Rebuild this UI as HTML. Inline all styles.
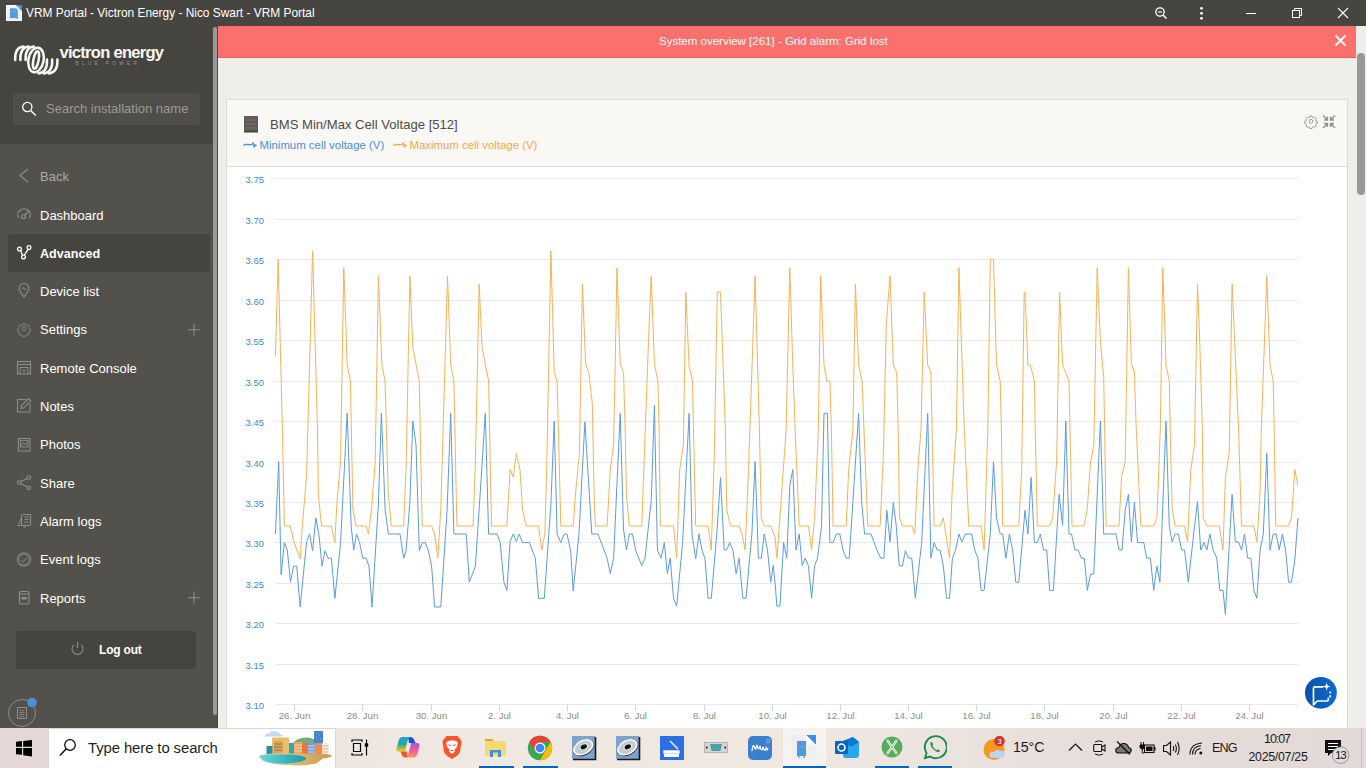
<!DOCTYPE html>
<html><head><meta charset="utf-8">
<style>
*{margin:0;padding:0;box-sizing:border-box}
html,body{width:1366px;height:768px;overflow:hidden;background:#efeeea;font-family:"Liberation Sans",sans-serif}
.abs{position:absolute}
#titlebar{left:0;top:0;width:1366px;height:26px;background:#474540;color:#fff;font-size:13px}
#sidebar{left:0;top:26px;width:218px;height:702px;background:#53514c}
#sbtop{left:0;top:0;width:212px;height:118px;background:#46443f}
.mi{position:absolute;left:40px;font-size:13.5px;color:#fff;line-height:16px}
.ic{position:absolute;left:16px}
#banner{left:218px;top:26px;width:1138px;height:32px;background:#fb706c;border-bottom:1px solid #f25a56;color:#fff;font-size:11.5px}
#card{left:226px;top:99px;width:1122px;height:640px;background:#fff;border:1px solid #dcdad6}
#cardhead{left:0;top:0;width:1120px;height:67px;background:#f9f8f5;border-bottom:1px solid #dcdad6}
#taskbar{left:0;top:728px;width:1366px;height:40px;background:linear-gradient(90deg,#e9e0dc 0%,#f0e9e1 35%,#efe7e0 60%,#e7dedb 80%,#e2d9d8 100%)}
</style></head><body>
<div id="titlebar" class="abs">
  <svg class="abs" style="left:6px;top:5px" width="16" height="16" viewBox="0 0 16 16"><rect width="16" height="16" fill="#fcfcfc"/><rect x="1" y="1" width="14" height="14" fill="#f1f0ef"/><path d="M9.8 0H16V6.2Z" fill="#3e8fdc"/><path d="M12.5 1.8L14 3" stroke="#bcd8f3" stroke-width="0.7"/><path d="M4 3.2H10L11.8 5V13.8H10.5L10 13H5.5L4 13.8Z" fill="#4a9de6"/><path d="M4 6.5H11.5" stroke="#c4a060" stroke-width="0.6"/></svg>
  <div class="abs" style="left:26px;top:5px;line-height:16px;font-size:11.9px">VRM Portal - Victron Energy - Nico Swart - VRM Portal</div>
<svg class="abs" style="left:1150px;top:0" width="216" height="26" viewBox="1150 0 216 26">
  <circle cx="1160" cy="12" r="4.2" stroke="#fff" stroke-width="1.3" fill="none"/><path d="M1158 12H1162" stroke="#fff" stroke-width="1.2"/><path d="M1163 15L1166.5 18.5" stroke="#fff" stroke-width="1.5"/>
  <circle cx="1201.5" cy="8.3" r="1.4" fill="#fff"/><circle cx="1201.5" cy="13.3" r="1.4" fill="#fff"/><circle cx="1201.5" cy="18.3" r="1.4" fill="#fff"/>
  <path d="M1246 13.5H1256" stroke="#fff" stroke-width="1"/>
  <rect x="1292.5" y="10.5" width="7" height="7" stroke="#fff" stroke-width="1" fill="none"/><path d="M1294.5 10.5V8.5H1301.5V15.5H1299.5" stroke="#fff" stroke-width="1" fill="none"/>
  <path d="M1338 8L1348 18M1348 8L1338 18" stroke="#fff" stroke-width="1.1"/>
</svg>
</div>
<div id="sidebar" class="abs">
  <div id="sbtop" class="abs"></div>
  <svg class="abs" style="left:12px;top:18px" width="52" height="32" viewBox="0 0 52 32">
  <g stroke="#f8f7f2" stroke-width="2.5" fill="none" stroke-linecap="round">
   <path d="M3.2 16Q2.6 3.5 11.5 2.6"/><path d="M8.4 16Q7.8 3.5 16.7 2.6"/><path d="M13.6 16Q13 3.5 21.9 2.6"/>
   <ellipse cx="24" cy="16" rx="7.6" ry="12.4" transform="rotate(11 24 16)"/>
   <ellipse cx="24" cy="16" rx="2.6" ry="9" transform="rotate(11 24 16)"/>
   <path d="M35 15.5Q35.6 28.5 26.5 29.4"/><path d="M40.2 15.5Q40.8 28.5 31.7 29.4"/><path d="M45.4 15.5Q46 28.5 36.9 29.4"/>
  </g></svg>
  <div class="abs" style="left:59.5px;top:16.8px;font-size:16.6px;font-weight:700;color:#f8f7f2;line-height:20px;letter-spacing:-0.75px">victron energy</div>
  <div class="abs" style="left:75.5px;top:34.5px;font-size:4.6px;color:#9a9893;line-height:6px;letter-spacing:3.4px;font-weight:400">BLUE POWER</div>
  <div class="abs" style="left:212px;top:0;width:6px;height:118px;background:#4a4843"></div><div class="abs" style="left:217px;top:118px;width:1px;height:584px;background:#47453f"></div>
  <div class="abs" style="left:213px;top:1px;width:4px;height:688px;background:#9c9b97;border-radius:2px"></div>
  <div class="abs" style="left:8px;top:208px;width:202px;height:38px;background:#46443f;border-radius:3px"></div>
  <div class="abs" style="left:13px;top:67px;width:187px;height:32px;background:#504e49;border-radius:3px"></div>
  <div class="abs" style="left:46px;top:74.5px;font-size:13px;color:#9d9b96;line-height:16px">Search installation name</div>
  <svg class="abs" style="left:21px;top:74px" width="17" height="17"><circle cx="6.3" cy="7" r="4.6" stroke="#fff" stroke-width="1.3" fill="none"/><path d="M9.6 10.4L14.8 15.4" stroke="#fff" stroke-width="1.4"/></svg>
  <div class="mi" style="top:143.2px;color:#a9a7a2;font-weight:400;font-size:13px">Back</div><div class="mi" style="top:181.5px;color:#fff;font-weight:400;font-size:13px">Dashboard</div><div class="mi" style="top:219.8px;color:#fff;font-weight:700;font-size:12.6px">Advanced</div><div class="mi" style="top:258.1px;color:#fff;font-weight:400;font-size:13px">Device list</div><div class="mi" style="top:296.4px;color:#fff;font-weight:400;font-size:13px">Settings</div><div class="mi" style="top:334.7px;color:#fff;font-weight:400;font-size:13px">Remote Console</div><div class="mi" style="top:373.0px;color:#fff;font-weight:400;font-size:13px">Notes</div><div class="mi" style="top:411.3px;color:#fff;font-weight:400;font-size:13px">Photos</div><div class="mi" style="top:449.6px;color:#fff;font-weight:400;font-size:13px">Share</div><div class="mi" style="top:487.9px;color:#fff;font-weight:400;font-size:13px">Alarm logs</div><div class="mi" style="top:526.2px;color:#fff;font-weight:400;font-size:13px">Event logs</div><div class="mi" style="top:564.5px;color:#fff;font-weight:400;font-size:13px">Reports</div><svg class="abs" style="left:0;top:-26px" width="212" height="728"><path d="M28 169L20 175.5L28 182" stroke="#8f8d88" stroke-width="1.2" fill="none"/><path d="M18.6 218.3A6.3 6.3 0 1 1 29.4 218.3" stroke="#8f8d88" stroke-width="1.2" fill="none"/><circle cx="23.5" cy="216.5" r="2" stroke="#8f8d88" stroke-width="1.2" fill="none"/><path d="M25 215L28.5 211.5" stroke="#8f8d88" stroke-width="1.2"/><circle cx="19.5" cy="249" r="1.9" stroke="#fff" stroke-width="1.3" fill="none"/><circle cx="29" cy="247.5" r="1.9" stroke="#fff" stroke-width="1.3" fill="none"/><circle cx="23.5" cy="257" r="1.9" stroke="#fff" stroke-width="1.3" fill="none"/><path d="M20.8 250.6L22.4 255.2M24.3 255.2L28.2 249.4" stroke="#fff" stroke-width="1.3"/><path d="M24 297C21 293 19 290.5 19 288.5A5 5 0 0 1 29 288.5C29 290.5 27 293 24 297Z" stroke="#8f8d88" stroke-width="1.1" fill="none"/><path d="M21.5 289L23 287.5L25 290L26.5 288.5" stroke="#8f8d88" stroke-width="1" fill="none"/><g transform="translate(24 328.7) scale(0.84) translate(-24 -328.7)"><circle cx="24" cy="328.7" r="2.3" stroke="#8f8d88" stroke-width="1.1" fill="none"/><path d="M22.7 322.6h2.6l.4 1.6 1.3.6 1.5-.8 1.8 1.8-.8 1.5.6 1.3 1.6.4v2.6l-1.6.4-.6 1.3.8 1.5-1.8 1.8-1.5-.8-1.3.6-.4 1.6h-2.6l-.4-1.6-1.3-.6-1.5.8-1.8-1.8.8-1.5-.6-1.3-1.6-.4v-2.6l1.6-.4.6-1.3-.8-1.5 1.8-1.8 1.5.8 1.3-.6z" stroke="#8f8d88" stroke-width="1.1" fill="none"/></g><rect x="17.5" y="361.5" width="13" height="12.5" stroke="#8f8d88" stroke-width="1.1" fill="none"/><path d="M17.5 364.5h13M20 367.5h8v6.5M20 367.5v6.5" stroke="#8f8d88" stroke-width="1.1" fill="none"/><circle cx="24" cy="371" r="1" stroke="#8f8d88" stroke-width="0.9" fill="none"/><path d="M26 399.5H17.5V412H30V404" stroke="#8f8d88" stroke-width="1.1" fill="none"/><path d="M21 408.5L21.5 405.5L28.5 398.5L30.8 400.8L23.8 407.8Z" stroke="#8f8d88" stroke-width="1.1" fill="none"/><rect x="18.5" y="438.5" width="11.5" height="12.5" stroke="#8f8d88" stroke-width="1.1" fill="none"/><rect x="20.5" y="440.5" width="7.5" height="6.5" stroke="#8f8d88" stroke-width="0.9" fill="none"/><path d="M21 446L23.5 442.5L25.5 445L28 441.5" stroke="#8f8d88" stroke-width="0.9" fill="none"/><circle cx="19.2" cy="482.5" r="1.8" stroke="#8f8d88" stroke-width="1.1" fill="none"/><circle cx="28.8" cy="477.5" r="1.8" stroke="#8f8d88" stroke-width="1.1" fill="none"/><circle cx="28.8" cy="487.8" r="1.8" stroke="#8f8d88" stroke-width="1.1" fill="none"/><path d="M20.8 481.6L27.2 478.4M20.8 483.4L27.2 486.9" stroke="#8f8d88" stroke-width="1.1"/><path d="M21.5 525V516.5A2 2 0 0 1 23.5 514.5H30.5V525" stroke="#8f8d88" stroke-width="1.1" fill="none"/><path d="M17.5 525.5H30.5M23.5 527H26M24.5 517h4M24.5 519.5h4M24.5 522h4" stroke="#8f8d88" stroke-width="1.1" fill="none"/><path d="M21.5 518L18.5 524.5" stroke="#8f8d88" stroke-width="1" fill="none"/><circle cx="24" cy="559.5" r="6.5" stroke="#8f8d88" stroke-width="1.1" fill="none"/><circle cx="24" cy="559.5" r="5" stroke="#8f8d88" stroke-width="0.6" fill="none"/><path d="M21.5 560L23.2 561.8L27 557.5" stroke="#8f8d88" stroke-width="1" fill="none"/><rect x="19.5" y="591.5" width="9.5" height="12.5" rx="1.5" stroke="#8f8d88" stroke-width="1.1" fill="none"/><path d="M19.5 594h9.5" stroke="#8f8d88" stroke-width="1" /><rect x="21.5" y="597" width="5.5" height="2.5" fill="#8f8d88"/><path d="M188 329.7H200M194 323.7V335.7" stroke="#8f8d88" stroke-width="1.1"/><path d="M188 597.8H200M194 591.8V603.8" stroke="#8f8d88" stroke-width="1.1"/></svg>
  <div class="abs" style="left:16px;top:605px;width:180px;height:38px;background:#46443f;border-radius:3px"></div>
  <svg class="abs" style="left:70px;top:615px" width="15" height="15"><path d="M3.8 3.8A5.5 5.5 0 1 0 11.2 3.8" stroke="#8f8d88" stroke-width="1.1" fill="none"/><path d="M7.5 1V7" stroke="#8f8d88" stroke-width="1.1"/></svg>
  <div class="abs" style="left:99px;top:616px;font-size:12px;font-weight:700;color:#fff;line-height:16px;letter-spacing:-0.2px">Log out</div>
  <svg class="abs" style="left:6px;top:670px" width="34" height="34"><circle cx="16" cy="17" r="13.5" stroke="#8f8d88" stroke-width="1" fill="none"/><rect x="11.5" y="11.5" width="9" height="11" stroke="#8f8d88" stroke-width="1" fill="none"/><path d="M13.5 14.5h5M13.5 16.5h5M13.5 18.5h5M13.5 20.5h5" stroke="#8f8d88" stroke-width="0.8"/><circle cx="26" cy="6.5" r="4.8" fill="#4a90d9"/></svg>
</div>
<div id="banner" class="abs"><div class="abs" style="left:441px;top:8px;line-height:14px">System overview [261] - Grid alarm: Grid lost</div><svg class="abs" style="left:1116px;top:8px" width="13" height="13"><path d="M1.5 1.5L11.5 11.5M11.5 1.5L1.5 11.5" stroke="#fff" stroke-width="1.8"/></svg></div>
<div class="abs" style="left:1357px;top:53px;width:8px;height:142px;background:#9a9995;border-radius:4px"></div>
<div id="card" class="abs">
  <div id="cardhead" class="abs"></div>
</div>
<svg class="abs" style="left:0;top:0" width="1366" height="728" viewBox="0 0 1366 728"><path d="M275 178.5H1298" stroke="#e9e9e9" stroke-width="1"/><path d="M275 219.5H1298" stroke="#e9e9e9" stroke-width="1"/><path d="M275 259.5H1298" stroke="#e9e9e9" stroke-width="1"/><path d="M275 300.5H1298" stroke="#e9e9e9" stroke-width="1"/><path d="M275 340.5H1298" stroke="#e9e9e9" stroke-width="1"/><path d="M275 381.5H1298" stroke="#e9e9e9" stroke-width="1"/><path d="M275 421.5H1298" stroke="#e9e9e9" stroke-width="1"/><path d="M275 462.5H1298" stroke="#e9e9e9" stroke-width="1"/><path d="M275 502.5H1298" stroke="#e9e9e9" stroke-width="1"/><path d="M275 542.5H1298" stroke="#e9e9e9" stroke-width="1"/><path d="M275 583.5H1298" stroke="#e9e9e9" stroke-width="1"/><path d="M275 623.5H1298" stroke="#e9e9e9" stroke-width="1"/><path d="M275 664.5H1298" stroke="#e9e9e9" stroke-width="1"/><path d="M275 704.5H1298" stroke="#e9e9e9" stroke-width="1"/><path d="M294.5 704V711" stroke="#ccd6eb" stroke-width="1"/><text x="294.5" y="719.3" text-anchor="middle" font-size="9.6" fill="#8c8c8c" font-family="Liberation Sans">26. Jun</text><path d="M362.5 704V711" stroke="#ccd6eb" stroke-width="1"/><text x="362.5" y="719.3" text-anchor="middle" font-size="9.6" fill="#8c8c8c" font-family="Liberation Sans">28. Jun</text><path d="M431.5 704V711" stroke="#ccd6eb" stroke-width="1"/><text x="431.5" y="719.3" text-anchor="middle" font-size="9.6" fill="#8c8c8c" font-family="Liberation Sans">30. Jun</text><path d="M499.5 704V711" stroke="#ccd6eb" stroke-width="1"/><text x="499.5" y="719.3" text-anchor="middle" font-size="9.6" fill="#8c8c8c" font-family="Liberation Sans">2. Jul</text><path d="M567.5 704V711" stroke="#ccd6eb" stroke-width="1"/><text x="567.5" y="719.3" text-anchor="middle" font-size="9.6" fill="#8c8c8c" font-family="Liberation Sans">4. Jul</text><path d="M635.5 704V711" stroke="#ccd6eb" stroke-width="1"/><text x="635.5" y="719.3" text-anchor="middle" font-size="9.6" fill="#8c8c8c" font-family="Liberation Sans">6. Jul</text><path d="M704.5 704V711" stroke="#ccd6eb" stroke-width="1"/><text x="704.5" y="719.3" text-anchor="middle" font-size="9.6" fill="#8c8c8c" font-family="Liberation Sans">8. Jul</text><path d="M772.5 704V711" stroke="#ccd6eb" stroke-width="1"/><text x="772.5" y="719.3" text-anchor="middle" font-size="9.6" fill="#8c8c8c" font-family="Liberation Sans">10. Jul</text><path d="M840.5 704V711" stroke="#ccd6eb" stroke-width="1"/><text x="840.5" y="719.3" text-anchor="middle" font-size="9.6" fill="#8c8c8c" font-family="Liberation Sans">12. Jul</text><path d="M908.5 704V711" stroke="#ccd6eb" stroke-width="1"/><text x="908.5" y="719.3" text-anchor="middle" font-size="9.6" fill="#8c8c8c" font-family="Liberation Sans">14. Jul</text><path d="M976.5 704V711" stroke="#ccd6eb" stroke-width="1"/><text x="976.5" y="719.3" text-anchor="middle" font-size="9.6" fill="#8c8c8c" font-family="Liberation Sans">16. Jul</text><path d="M1044.5 704V711" stroke="#ccd6eb" stroke-width="1"/><text x="1044.5" y="719.3" text-anchor="middle" font-size="9.6" fill="#8c8c8c" font-family="Liberation Sans">18. Jul</text><path d="M1113.5 704V711" stroke="#ccd6eb" stroke-width="1"/><text x="1113.5" y="719.3" text-anchor="middle" font-size="9.6" fill="#8c8c8c" font-family="Liberation Sans">20. Jul</text><path d="M1181.5 704V711" stroke="#ccd6eb" stroke-width="1"/><text x="1181.5" y="719.3" text-anchor="middle" font-size="9.6" fill="#8c8c8c" font-family="Liberation Sans">22. Jul</text><path d="M1249.5 704V711" stroke="#ccd6eb" stroke-width="1"/><text x="1249.5" y="719.3" text-anchor="middle" font-size="9.6" fill="#8c8c8c" font-family="Liberation Sans">24. Jul</text><text x="245.5" y="182.6" font-size="9.5" fill="#3f86d6" font-family="Liberation Sans">3.75</text><text x="245.5" y="223.6" font-size="9.5" fill="#3f86d6" font-family="Liberation Sans">3.70</text><text x="245.5" y="263.6" font-size="9.5" fill="#3f86d6" font-family="Liberation Sans">3.65</text><text x="245.5" y="304.6" font-size="9.5" fill="#3f86d6" font-family="Liberation Sans">3.60</text><text x="245.5" y="344.6" font-size="9.5" fill="#3f86d6" font-family="Liberation Sans">3.55</text><text x="245.5" y="385.6" font-size="9.5" fill="#3f86d6" font-family="Liberation Sans">3.50</text><text x="245.5" y="425.6" font-size="9.5" fill="#3f86d6" font-family="Liberation Sans">3.45</text><text x="245.5" y="466.6" font-size="9.5" fill="#3f86d6" font-family="Liberation Sans">3.40</text><text x="245.5" y="506.6" font-size="9.5" fill="#3f86d6" font-family="Liberation Sans">3.35</text><text x="245.5" y="546.6" font-size="9.5" fill="#3f86d6" font-family="Liberation Sans">3.30</text><text x="245.5" y="587.6" font-size="9.5" fill="#3f86d6" font-family="Liberation Sans">3.25</text><text x="245.5" y="627.6" font-size="9.5" fill="#3f86d6" font-family="Liberation Sans">3.20</text><text x="245.5" y="668.6" font-size="9.5" fill="#3f86d6" font-family="Liberation Sans">3.15</text><text x="245.5" y="708.6" font-size="9.5" fill="#3f86d6" font-family="Liberation Sans">3.10</text><path d="M275.4 356.3 L278.2 259.3 L282.4 430.0 L284.4 526.0 L290.3 526.0 L294.0 542.6 L300.2 558.7 L301.7 534.0 L306.6 474.6 L312.6 251.0 L317.5 430.0 L318.3 494.0 L321.5 526.0 L331.4 526.0 L334.9 542.6 L336.8 504.0 L340.5 462.0 L343.8 267.7 L347.2 365.0 L350.4 381.0 L352.9 509.0 L356.1 526.0 L366.0 526.0 L368.5 534.0 L371.5 509.0 L375.2 462.0 L378.4 275.9 L381.9 365.0 L385.0 381.0 L388.3 494.0 L391.3 526.0 L400.0 526.0 L403.7 526.0 L406.1 467.0 L409.9 275.9 L412.8 347.7 L419.3 381.0 L420.2 430.0 L422.2 526.0 L431.6 526.0 L434.6 534.0 L437.8 558.2 L440.8 509.2 L447.5 275.9 L450.7 363.8 L453.9 381.0 L456.9 526.0 L473.0 526.0 L475.4 462.0 L479.2 284.0 L482.1 347.7 L488.6 381.0 L491.5 526.0 L506.9 526.0 L510.1 469.6 L513.3 477.0 L516.3 453.5 L520.0 469.6 L522.5 509.2 L525.0 521.6 L526.2 526.0 L538.6 526.0 L541.8 550.0 L544.8 534.0 L546.7 469.6 L550.9 251.1 L554.2 372.4 L557.1 381.0 L558.4 430.0 L560.8 526.0 L573.2 526.0 L575.7 491.9 L579.4 453.5 L582.4 284.0 L585.6 363.8 L588.8 372.4 L592.3 403.4 L594.3 504.0 L595.5 526.0 L607.1 526.0 L610.3 469.6 L613.6 444.9 L617.0 267.7 L620.2 363.8 L623.5 372.4 L625.2 430.0 L626.4 494.4 L629.4 526.0 L641.8 526.0 L643.8 469.6 L648.7 336.5 L651.2 275.9 L654.4 363.8 L657.9 381.0 L659.1 430.0 L660.3 526.0 L673.5 526.0 L676.7 558.2 L679.7 469.6 L683.4 444.9 L685.8 292.0 L689.1 366.2 L692.5 381.0 L693.5 430.0 L695.7 526.0 L708.1 526.0 L711.3 550.0 L714.3 454.8 L717.3 292.0 L720.5 292.0 L725.4 430.0 L726.7 509.2 L730.4 526.0 L739.1 526.0 L742.0 534.0 L745.2 550.0 L748.5 469.6 L755.1 275.9 L759.4 430.0 L761.3 517.9 L764.3 526.0 L770.7 526.0 L773.7 534.0 L775.0 536.4 L776.9 558.2 L779.9 517.9 L786.1 430.0 L789.8 267.7 L792.8 366.2 L795.2 430.0 L799.2 526.0 L808.4 526.0 L811.6 550.0 L814.6 517.9 L818.3 430.0 L820.7 275.9 L824.0 365.0 L826.9 381.0 L829.9 381.0 L831.4 430.0 L833.1 526.0 L846.2 526.0 L848.7 469.6 L852.9 430.0 L855.4 284.0 L858.6 365.0 L862.1 381.0 L864.0 430.0 L867.8 526.0 L880.1 526.0 L883.4 454.8 L886.3 324.2 L890.0 275.9 L893.3 365.0 L896.7 372.4 L898.2 430.0 L899.5 517.9 L900.0 519.0 L902.4 526.0 L911.8 526.0 L914.8 534.0 L917.8 469.6 L921.0 430.0 L924.2 292.0 L927.7 365.0 L930.9 372.4 L932.1 430.0 L934.1 526.0 L940.0 526.0 L943.3 517.9 L949.5 558.2 L952.4 485.7 L956.4 430.0 L958.9 267.7 L964.3 430.0 L968.8 526.0 L981.1 526.0 L984.1 550.0 L987.8 430.0 L990.3 259.3 L993.5 259.3 L996.5 365.0 L1000.2 381.0 L1001.4 430.0 L1002.7 526.0 L1018.8 526.0 L1021.7 469.6 L1024.2 292.0 L1025.0 292.0 L1027.9 365.0 L1030.4 365.0 L1034.4 381.0 L1035.3 430.0 L1037.3 526.0 L1049.7 526.0 L1052.7 517.9 L1056.6 462.0 L1059.6 292.0 L1062.6 365.0 L1069.0 381.0 L1070.0 430.0 L1072.0 526.0 L1083.9 526.0 L1087.3 509.2 L1090.5 462.0 L1093.8 444.9 L1097.2 267.7 L1100.4 341.5 L1103.7 377.4 L1104.7 430.0 L1106.1 526.0 L1119.0 526.0 L1121.5 477.0 L1125.2 462.0 L1128.4 267.7 L1131.4 363.8 L1134.4 372.4 L1136.3 430.0 L1140.8 526.0 L1150.0 526.0 L1153.7 526.0 L1156.9 517.9 L1160.3 430.0 L1162.8 267.7 L1166.0 365.0 L1169.3 381.0 L1170.2 430.0 L1172.2 509.2 L1175.2 526.0 L1184.6 526.0 L1187.6 541.9 L1190.8 469.6 L1194.5 444.9 L1197.5 284.0 L1199.5 334.0 L1202.4 430.0 L1203.2 517.9 L1206.9 526.0 L1219.3 526.0 L1223.0 550.0 L1225.4 477.0 L1229.2 453.5 L1232.1 284.0 L1238.6 430.0 L1241.5 526.0 L1253.9 526.0 L1256.9 541.9 L1260.1 491.9 L1261.3 430.0 L1266.8 275.9 L1270.0 365.0 L1273.2 381.0 L1274.2 430.0 L1275.7 526.0 L1288.6 526.0 L1291.5 517.9 L1294.8 469.6 L1298.0 485.7" stroke="#f7b257" stroke-width="1" fill="none" stroke-linejoin="round"/><path d="M275.4 534.0 L278.7 461.7 L281.1 574.8 L284.4 542.6 L287.3 550.0 L290.5 582.2 L293.5 566.1 L296.7 566.1 L300.2 607.0 L306.6 541.4 L309.6 534.0 L312.6 550.8 L315.8 517.9 L319.0 535.2 L322.0 566.1 L325.0 550.8 L328.2 558.2 L331.4 558.2 L334.9 598.3 L340.5 543.9 L347.2 413.0 L351.2 526.5 L353.7 550.0 L356.6 534.0 L359.6 542.6 L362.8 558.2 L366.0 558.2 L369.0 566.1 L372.0 607.0 L378.4 504.0 L381.4 413.0 L385.1 509.2 L388.3 534.0 L400.0 534.0 L403.7 558.2 L406.1 550.8 L409.9 501.8 L412.8 421.2 L416.0 444.9 L419.3 550.8 L422.2 542.6 L425.2 542.6 L428.4 550.8 L431.6 566.1 L434.6 607.0 L440.8 607.0 L447.0 511.7 L450.7 413.3 L453.9 534.0 L466.3 534.0 L469.3 582.2 L475.4 566.1 L481.1 479.5 L485.3 413.3 L488.6 534.0 L497.0 534.0 L500.2 542.6 L503.9 582.2 L506.9 590.4 L510.1 541.4 L513.3 534.0 L516.3 541.4 L519.3 534.0 L522.5 542.6 L523.0 542.6 L525.0 542.6 L529.4 542.6 L535.3 558.2 L538.6 598.3 L544.3 598.3 L550.9 504.3 L554.2 421.2 L557.1 534.0 L560.8 542.6 L564.1 534.0 L567.0 534.0 L570.7 550.8 L573.2 590.9 L578.9 535.2 L584.9 422.0 L591.8 534.0 L598.0 534.0 L607.1 558.2 L610.3 573.6 L613.6 558.2 L620.2 413.3 L623.5 529.0 L626.4 550.0 L629.4 534.0 L632.6 534.0 L635.8 550.8 L641.8 565.6 L645.0 558.2 L650.0 511.7 L651.2 501.8 L654.4 405.3 L657.4 550.0 L661.1 558.2 L664.3 542.6 L667.3 573.6 L670.2 558.2 L673.5 598.3 L676.7 606.2 L682.6 542.6 L689.1 413.3 L692.0 534.0 L695.7 558.7 L699.0 534.0 L701.9 550.0 L704.9 558.2 L708.1 598.3 L711.3 598.3 L716.8 534.0 L720.5 477.5 L724.2 550.0 L726.7 550.0 L729.7 542.6 L732.9 550.0 L736.1 573.6 L739.1 558.2 L742.8 598.3 L746.0 598.3 L751.9 534.0 L755.1 461.7 L758.4 558.2 L761.3 558.2 L764.3 534.0 L767.5 550.0 L770.7 582.2 L773.2 565.6 L775.0 582.0 L776.9 606.2 L779.9 606.2 L783.6 542.6 L786.8 558.2 L789.8 485.7 L792.8 469.6 L796.0 550.0 L799.2 534.0 L802.2 565.6 L805.1 558.2 L808.4 565.6 L811.6 598.3 L814.6 565.6 L817.5 558.2 L821.5 526.5 L824.0 413.3 L827.4 413.3 L829.9 542.6 L833.1 542.6 L836.3 534.0 L839.8 534.0 L843.0 550.0 L846.2 558.2 L849.2 558.2 L852.9 501.8 L858.6 413.3 L861.6 501.8 L864.6 534.0 L871.0 534.0 L876.9 550.0 L880.9 558.2 L883.9 558.2 L886.8 510.4 L890.0 541.9 L893.3 502.3 L896.2 525.3 L899.2 565.6 L902.4 566.1 L905.4 550.8 L908.6 558.2 L911.8 558.2 L915.3 598.3 L921.7 542.6 L927.7 413.3 L930.9 558.2 L934.1 542.6 L937.1 550.0 L940.0 550.0 L943.3 565.6 L946.5 598.3 L949.5 598.3 L952.4 558.2 L955.6 550.0 L958.9 534.0 L961.8 541.9 L965.5 534.0 L971.7 534.0 L974.7 550.0 L977.9 558.2 L981.1 590.4 L984.1 590.4 L990.3 534.0 L993.5 461.7 L996.5 517.9 L1000.2 534.0 L1002.7 534.0 L1005.9 558.2 L1009.4 534.0 L1012.6 550.0 L1015.8 582.2 L1018.8 582.2 L1025.0 510.4 L1027.9 534.0 L1031.1 477.5 L1034.4 542.6 L1037.3 542.6 L1040.3 534.0 L1043.5 550.0 L1046.7 550.0 L1049.7 590.4 L1053.4 590.4 L1059.1 494.4 L1062.6 525.3 L1065.8 421.0 L1069.0 534.0 L1071.5 534.0 L1075.0 550.0 L1078.2 550.0 L1081.4 558.2 L1084.4 558.2 L1087.3 590.4 L1090.5 574.1 L1093.8 574.1 L1100.4 421.0 L1103.7 534.0 L1116.0 534.0 L1119.0 550.0 L1122.0 550.0 L1125.2 510.4 L1128.4 494.4 L1131.4 541.9 L1134.4 502.3 L1137.6 542.6 L1143.8 542.6 L1146.7 558.2 L1147.5 558.2 L1150.0 558.2 L1150.4 558.2 L1153.7 590.4 L1156.9 566.1 L1159.9 582.2 L1166.0 421.0 L1169.3 526.5 L1172.2 541.9 L1175.2 534.0 L1178.4 534.0 L1181.6 550.0 L1184.6 550.0 L1188.3 582.2 L1194.5 526.5 L1197.5 501.8 L1200.7 550.0 L1203.9 542.6 L1206.9 550.0 L1209.9 534.0 L1213.1 550.0 L1216.8 558.2 L1219.8 590.4 L1223.0 590.4 L1225.4 614.4 L1232.1 494.4 L1235.3 541.9 L1238.6 541.9 L1241.5 550.0 L1244.5 534.0 L1247.7 558.2 L1250.9 558.2 L1253.9 590.4 L1256.9 598.3 L1260.1 550.0 L1263.3 534.0 L1266.8 453.5 L1270.0 550.0 L1273.2 534.0 L1276.2 534.0 L1279.2 550.0 L1282.4 534.0 L1285.6 550.0 L1288.6 582.2 L1291.5 582.2 L1294.8 560.0 L1298.0 517.9" stroke="#5b9bdf" stroke-width="1" fill="none" stroke-linejoin="round"/></svg>
<svg class="abs" style="left:243px;top:115px" width="16" height="18" viewBox="0 0 16 18"><rect x="1" y="1" width="14" height="16" rx="1" fill="#5e5c58"/><rect x="1" y="16" width="14" height="1.5" fill="#3f3e3b"/><path d="M3 5h10M3 9h10M3 13h10" stroke="#7a7874" stroke-width="0.8"/><path d="M11 4.5h1M11 8.5h1M11 12.5h1" stroke="#c0504d" stroke-width="1"/></svg>
<div class="abs" style="left:270px;top:117px;font-size:13.1px;color:#4d4b47;line-height:16px">BMS Min/Max Cell Voltage [512]</div>
<svg class="abs" style="left:243px;top:141px" width="16" height="8"><path d="M0.7 5Q1.6 3 2.8 3.5L8.7 3.7L10.2 1.8L11.2 6.2L12.2 3.8L13.6 4.8" stroke="#4a90d9" stroke-width="1.3" fill="none" stroke-linejoin="round"/></svg>
<div class="abs" style="left:259.5px;top:138px;font-size:11.4px;color:#4a90d9;line-height:14px">Minimum cell voltage (V)</div>
<svg class="abs" style="left:393px;top:141px" width="16" height="8"><path d="M0.7 5Q1.6 3 2.8 3.5L8.7 3.7L10.2 1.8L11.2 6.2L12.2 3.8L13.6 4.8" stroke="#f5a74a" stroke-width="1.3" fill="none" stroke-linejoin="round"/></svg>
<div class="abs" style="left:409.5px;top:138px;font-size:11.4px;color:#f5a74a;line-height:14px">Maximum cell voltage (V)</div>
<svg class="abs" style="left:1303px;top:114px" width="34" height="16" viewBox="0 0 34 16"><g transform="translate(8 7.3) scale(0.88) translate(-8 -7.5)"><circle cx="8" cy="7.5" r="2.2" stroke="#8f8d88" stroke-width="1" fill="none"/><path d="M6.8 1.5h2.4l.4 1.5 1.2.5 1.4-.8 1.7 1.7-.8 1.4.5 1.2 1.5.4v2.4l-1.5.4-.5 1.2.8 1.4-1.7 1.7-1.4-.8-1.2.5-.4 1.5h-2.4l-.4-1.5-1.2-.5-1.4.8-1.7-1.7.8-1.4-.5-1.2-1.5-.4v-2.4l1.5-.4.5-1.2-.8-1.4 1.7-1.7 1.4.8 1.2-.5z" stroke="#8f8d88" stroke-width="1" fill="none"/></g><path d="M20 1.5L24.5 6M24.5 2.5V6H21M32 1.5L27.5 6M27.5 2.5V6H31M20 14L24.5 9.5M24.5 13V9.5H21M32 14L27.5 9.5M27.5 13V9.5H31" stroke="#8f8d88" stroke-width="1.3" fill="none"/></svg>
<div id="taskbar" class="abs">
  <div class="abs" style="left:0;top:0;width:48px;height:40px;background:#e4d7d5"></div>
  <svg class="abs" style="left:16px;top:11.5px" width="17" height="17" viewBox="0 0 17 17"><path d="M0 1.8L6 1.1V6.8H0ZM7.2 1L16 0V6.8H7.2ZM0 8.1H6V14.8L0 14.2ZM7.2 8.1H16V16.4L7.2 15.3Z" fill="#000"/></svg>
  <div class="abs" style="left:48px;top:0;width:288px;height:40px;background:#fff;border:1px solid #d9d6d3;border-bottom:none"></div>
  <svg class="abs" style="left:59px;top:10px" width="18" height="19" viewBox="0 0 18 19"><circle cx="11" cy="7" r="5.3" stroke="#000" stroke-width="1.2" fill="none"/><path d="M7.2 10.8L1 17.5" stroke="#000" stroke-width="1.3"/></svg>
  <div class="abs" style="left:88px;top:11.5px;font-size:14.9px;color:#1f1f1f;line-height:17px;letter-spacing:-0.1px">Type here to search</div>
  <svg class="abs" style="left:258px;top:2px" width="76" height="37" viewBox="0 0 76 37">
    <defs><linearGradient id="wsand" x1="0" y1="0" x2="1" y2="0"><stop offset="0" stop-color="#f0d9a0"/><stop offset="1" stop-color="#c99a48"/></linearGradient><linearGradient id="wsea" x1="0" y1="0" x2="1" y2="0"><stop offset="0" stop-color="#5ed8e0"/><stop offset="1" stop-color="#1a9aa8"/></linearGradient></defs>
    <path d="M6.5 6.5Q7 3 11 3.5Q13 0 17.5 1.5Q21 1 22 4Q25 4.5 25.5 6.5Z" fill="#c2dcef"/>
    <path d="M34 13.5Q41 6.5 50 7.5Q58 9 63 13.5Z" fill="#72ad78"/>
    <rect x="56" y="1" width="9" height="13" fill="#4a7fd0"/><path d="M58 3h1M61 5h1M58 7h1M62 9h1M59 11h1" stroke="#9cc0f0" stroke-width="0.8"/>
    <rect x="14" y="7.5" width="17" height="17" fill="#e9bd6a"/><rect x="16" y="11" width="8" height="13" fill="#d8a858"/><path d="M16 14h9M16 17h9M16 20h9" stroke="#8a6a50" stroke-width="0.8"/>
    <rect x="8.5" y="16" width="6" height="8" fill="#2a8fa0"/>
    <rect x="31" y="13" width="5" height="11" fill="#2fa8b8"/><rect x="36" y="12" width="8" height="12" fill="#e8a860"/><path d="M36 15h8M36 18h8M36 21h8" stroke="#f6e0c0" stroke-width="0.8"/>
    <rect x="44" y="13" width="6" height="11" fill="#e07848"/><rect x="50" y="13" width="7" height="11" fill="#7a9ae0"/><path d="M50 16h7M50 19h7M50 22h7" stroke="#e8eefc" stroke-width="0.8"/>
    <rect x="57" y="13" width="7" height="11" fill="#e8904a"/><rect x="64" y="13" width="6.5" height="12" rx="1" fill="#f4f0ea"/><path d="M64 16h6.5M64 19h6.5M64 22h6.5" stroke="#e8a060" stroke-width="0.9"/>
    <path d="M1.3 25.5Q6 23.5 20 23.5H60Q70 23.5 74 25.5Q72 28 65 28.5L58 33.5Q45 36.5 32 35Q16 35.5 5 31Q1 28 1.3 25.5Z" fill="url(#wsand)"/>
    <path d="M1.5 25.5Q10 24 30 24.5Q46 25 48.5 28.5Q46 32 35 33Q18 34.5 8 31.5Q2 29 1.5 25.5Z" fill="url(#wsea)"/>
  </svg>
  <svg class="abs" style="left:351px;top:11px" width="18" height="17" viewBox="0 0 18 17"><path d="M1 3V1H11V3M1 14V16H11V14M2.5 4.5H9.5V12.5H2.5Z" stroke="#000" stroke-width="1.2" fill="none"/><path d="M15.5 0.5V16.5" stroke="#000" stroke-width="1.2"/><rect x="13.8" y="4.3" width="3.4" height="3.4" fill="#000"/></svg>
  <svg class="abs" style="left:396px;top:8px" width="24" height="23" viewBox="0 0 24 23">
    <defs><linearGradient id="cp1" x1="0" y1="0" x2="0" y2="1"><stop offset="0" stop-color="#13a0f2"/><stop offset="0.5" stop-color="#2fa890"/><stop offset="1" stop-color="#f8cc10"/></linearGradient><linearGradient id="cp2" x1="0" y1="0" x2="0" y2="1"><stop offset="0" stop-color="#a458e8"/><stop offset="0.5" stop-color="#f05a90"/><stop offset="1" stop-color="#f89a60"/></linearGradient></defs>
    <path d="M12 1H14.5Q17 1 18.5 4.5L19.5 7H13Z" fill="#1a4fd8"/>
    <path d="M6 1H14.5Q12.5 1.5 11.8 4L8.8 15.5H2Q0 15.5 0.4 13L2.8 4Q3.8 1 6 1Z" fill="url(#cp1)"/>
    <path d="M11.5 21.5H9Q6.8 21.5 5.5 18.2L4.6 15.5H11Z" fill="#f05a2a"/>
    <path d="M18 21.5H9.5Q11.5 21 12.2 18.5L15.2 7H22Q24 7 23.6 9.5L21.2 18.5Q20.2 21.5 18 21.5Z" fill="url(#cp2)"/>
  </svg>
  <svg class="abs" style="left:442px;top:7px" width="20" height="25" viewBox="0 0 20 25"><path d="M4.5 1H15.5L18.5 4.5L19.5 7L18 17Q17 19.5 14 21.5L10 24L6 21.5Q3 19.5 2 17L0.5 7L1.5 4.5Z" fill="#fb542b"/><path d="M5 6.5L8 5.5H12L15 6.5L15.8 8.5L14.5 12.5L12.5 14.5L13 16.5L10 19L7 16.5L7.5 14.5L5.5 12.5L4.2 8.5Z" fill="#fff"/><path d="M6.5 9.5L9 11M13.5 9.5L11 11M8.5 15.5H11.5" stroke="#fb542b" stroke-width="1"/></svg>
  <svg class="abs" style="left:484px;top:10px" width="23" height="19" viewBox="0 0 23 19"><path d="M1 3Q1 1 3 1H8L10 3H21Q22 3 22 5V17Q22 18 21 18H2Q1 18 1 17Z" fill="#f8d775"/><path d="M1 1H8L10 3H1Z" fill="#e2a827"/><path d="M6 19V12H17V19H14V14.5H9V19Z" fill="#3c8fe0"/></svg>
  <svg class="abs" style="left:527px;top:7px" width="26" height="26" viewBox="0 0 26 26"><circle cx="13" cy="13" r="12.2" fill="#34a853"/><path d="M13 0.8A12.2 12.2 0 0 1 23.6 7H13Z M2.4 7A12.2 12.2 0 0 1 13 0.8L13 7Z" fill="#ea4335"/><path d="M23.6 7A12.2 12.2 0 0 1 13 25.2L18.3 16Z" fill="#fbbc04"/><path d="M2.4 7H13L7.7 16Z" fill="#ea4335"/><circle cx="13" cy="13" r="5.5" fill="#fff"/><circle cx="13" cy="13" r="4.3" fill="#4285f4"/></svg>
  <svg class="abs" style="left:571px;top:7px" width="26" height="26" viewBox="0 0 26 26"><rect x="1" y="1" width="23" height="23" fill="#7ea2cf"/><path d="M2 24.5H24.5V2" stroke="#1a1a1a" stroke-width="1.6" fill="none"/><ellipse cx="12.5" cy="12.8" rx="11.3" ry="7.6" transform="rotate(-28 12.5 12.8)" fill="#2a2a2a"/><ellipse cx="12.3" cy="12.3" rx="11" ry="7.3" transform="rotate(-28 12.3 12.3)" fill="#fafafa"/><ellipse cx="12.3" cy="12.3" rx="9.2" ry="5.8" transform="rotate(-28 12.3 12.3)" fill="#c2ccd2"/><ellipse cx="12.8" cy="11.8" rx="4.3" ry="2.8" transform="rotate(-28 12.8 11.8)" fill="#fafafa"/><ellipse cx="12.8" cy="11.8" rx="3.4" ry="2.2" transform="rotate(-28 12.8 11.8)" fill="#111"/></svg>
  <svg class="abs" style="left:615px;top:7px" width="26" height="26" viewBox="0 0 26 26"><rect x="1" y="1" width="23" height="23" fill="#7ea2cf"/><path d="M2 24.5H24.5V2" stroke="#1a1a1a" stroke-width="1.6" fill="none"/><ellipse cx="12.5" cy="12.8" rx="11.3" ry="7.6" transform="rotate(-28 12.5 12.8)" fill="#2a2a2a"/><ellipse cx="12.3" cy="12.3" rx="11" ry="7.3" transform="rotate(-28 12.3 12.3)" fill="#fafafa"/><ellipse cx="12.3" cy="12.3" rx="9.2" ry="5.8" transform="rotate(-28 12.3 12.3)" fill="#c2ccd2"/><ellipse cx="12.8" cy="11.8" rx="4.3" ry="2.8" transform="rotate(-28 12.8 11.8)" fill="#fafafa"/><ellipse cx="12.8" cy="11.8" rx="3.4" ry="2.2" transform="rotate(-28 12.8 11.8)" fill="#111"/></svg>
  <svg class="abs" style="left:660px;top:8px" width="24" height="24" viewBox="0 0 24 24"><rect width="24" height="24" fill="#2b6fe6"/><path d="M10 5L18 13M4 15H19V17H4Z" stroke="#fff" stroke-width="1.4" fill="#fff"/><rect x="4" y="18" width="15" height="3" fill="#fff"/></svg>
  <svg class="abs" style="left:704px;top:14px" width="24" height="11" viewBox="0 0 24 11"><rect x="0.5" y="0.5" width="23" height="10" fill="#d5d5d5" stroke="#aaa" stroke-width="0.8"/><path d="M6 2H18L16.5 9H7.5Z" fill="#4aa3a8"/><circle cx="2.8" cy="5.5" r="1" fill="#222"/><circle cx="21.2" cy="5.5" r="1" fill="#222"/></svg>
  <svg class="abs" style="left:748px;top:8px" width="24" height="24" viewBox="0 0 24 24"><rect width="24" height="24" rx="5" fill="#3a7fd0"/><path d="M4 15Q5 7 6.5 11Q7.5 16 9 9Q10.5 16 12 10Q13.5 17 15 11Q16.5 17 18 12Q19 16 20 12" stroke="#fff" stroke-width="1.3" fill="none"/><circle cx="20" cy="5" r="1.8" stroke="#a8c8ee" stroke-width="0.7" fill="none"/></svg>
  <div class="abs" style="left:783px;top:0;width:43px;height:40px;background:#f6f2ef"></div>
  <svg class="abs" style="left:792px;top:7px" width="24" height="25" viewBox="0 0 24 25"><rect x="0" y="0" width="24" height="25" fill="#f0eeee"/><path d="M14 0H24V10Z" fill="#3f8fe0"/><path d="M14 0L24 10H14Z" fill="#fff"/><path d="M5 6H14V21H5Z" fill="#4a9ae6"/><path d="M5 12H14" stroke="#c8a060" stroke-width="0.8"/><path d="M7 21V23M12 21V23" stroke="#4a9ae6" stroke-width="1.2"/></svg>
  <svg class="abs" style="left:835px;top:8px" width="25" height="23" viewBox="0 0 25 23"><path d="M8 5L18 1L24 6V19Q24 22 21 22H10Q8 22 8 19Z" fill="#28a8ea"/><path d="M8 5L18 1L24 6L16 11Z" fill="#0f78d4"/><rect x="0" y="5" width="13" height="13" rx="1" fill="#0a64c2"/><circle cx="6.5" cy="11.5" r="3.5" stroke="#fff" stroke-width="1.6" fill="none"/></svg>
  <svg class="abs" style="left:881px;top:8px" width="22" height="22" viewBox="0 0 22 22"><circle cx="11" cy="11" r="10.5" fill="#58ab5e"/><path d="M6 4L16 18M16 4L6 18" stroke="#fff" stroke-width="2.2"/><path d="M6 4L16 18M16 4L6 18" stroke="#58ab5e" stroke-width="0.7"/></svg>
  <svg class="abs" style="left:922px;top:7px" width="25" height="25" viewBox="0 0 25 25"><path d="M3 23L4.5 18A11 11 0 1 1 8 21.5Z" stroke="#1c8a4e" stroke-width="1.9" fill="none"/><path d="M8.5 7.5Q8 9 9.5 12Q12 16 15.5 17Q17 17.5 18 16L16.5 14.5L14.5 15Q12 14 10.5 11L11 9L9.8 7Z" fill="#1c8a4e"/></svg>
  <div class="abs" style="left:479px;top:38px;width:35px;height:2px;background:#0067c0"></div>
  <div class="abs" style="left:523px;top:38px;width:35px;height:2px;background:#0067c0"></div>
  <div class="abs" style="left:783px;top:38px;width:43px;height:2px;background:#0067c0"></div>
  <div class="abs" style="left:875px;top:38px;width:34px;height:2px;background:#0067c0"></div>
  <div class="abs" style="left:918px;top:38px;width:34px;height:2px;background:#0067c0"></div>
  <svg class="abs" style="left:982px;top:7px" width="26" height="26" viewBox="0 0 26 26"><circle cx="12" cy="14.5" r="10.5" fill="#f39a1e"/><path d="M8 22Q6 16 12 17Q14 13 18 16Q23 15 23 19.5Q23 23 19 23H10Q8 23 8 22Z" fill="#bcd4f2"/><circle cx="17.5" cy="6" r="5.3" fill="#d13438"/><text x="17.5" y="8.8" font-size="7.5" fill="#fff" text-anchor="middle" font-family="Liberation Sans">3</text></svg>
  <div class="abs" style="left:1013px;top:11px;font-size:14.2px;color:#1a1a1a;line-height:16px;letter-spacing:-0.1px">15°C</div>
  <svg class="abs" style="left:1068px;top:15px" width="15" height="8" viewBox="0 0 15 8"><path d="M1 7.5L7.5 1L14 7.5" stroke="#111" stroke-width="1.2" fill="none"/></svg>
  <svg class="abs" style="left:1093px;top:12px" width="13" height="16" viewBox="0 0 13 16"><path d="M2 2Q6 -0.5 10 2M2 14Q6 16.5 10 14" stroke="#111" stroke-width="1" fill="none"/><rect x="0.7" y="4.5" width="8" height="7" rx="1" stroke="#111" stroke-width="1.1" fill="none"/><path d="M8.7 7L12 5V11L8.7 9" stroke="#111" stroke-width="1.1" fill="none"/></svg>
  <svg class="abs" style="left:1115px;top:13px" width="17" height="14" viewBox="0 0 17 14"><path d="M4 12Q0.5 12 0.8 9Q1 6.5 4 6.5Q5 2 9.5 2.5Q13 3 13.5 6.5Q16.5 7 16.2 9.5Q16 12 13 12Z" fill="#777" stroke="#111" stroke-width="1.1"/><path d="M2 0.5L15 13.5" stroke="#111" stroke-width="1.3"/></svg>
  <svg class="abs" style="left:1139px;top:14px" width="17" height="12" viewBox="0 0 17 12"><path d="M2 0V3M4.5 0V3M1 3H5.5V5Q5.5 7 3.3 7Q1 7 1 5Z" stroke="#111" stroke-width="1" fill="#111"/><path d="M3.2 7V11H5" stroke="#111" stroke-width="1" fill="none"/><rect x="5.5" y="3" width="9.5" height="7.5" stroke="#111" stroke-width="1.1" fill="none"/><rect x="7" y="4.5" width="6.5" height="4.5" fill="#111"/><rect x="15" y="5" width="1.5" height="3.5" fill="#111"/></svg>
  <svg class="abs" style="left:1163px;top:13px" width="17" height="15" viewBox="0 0 17 15"><path d="M0.6 4.5H3.5L7.5 1V14L3.5 10.5H0.6Z" stroke="#111" stroke-width="1.1" fill="none"/><path d="M10 5Q11.5 7.5 10 10M12.3 3.5Q14.5 7.5 12.3 11.5M14.5 1Q17.8 7.5 14.5 14" stroke="#111" stroke-width="1.1" fill="none"/></svg>
  <svg class="abs" style="left:1189px;top:14px" width="15" height="13" viewBox="0 0 15 13"><path d="M1 12.5Q1 2 13 1M3.5 12.5Q3.5 4.5 12 3.8M6 12.5Q6 7.5 11.5 6.5" stroke="#111" stroke-width="1.1" fill="none"/><circle cx="11.8" cy="11" r="1.5" fill="#111"/></svg>
  <div class="abs" style="left:1212px;top:13px;font-size:12.6px;color:#1a1a1a;line-height:14px;letter-spacing:-0.9px">ENG</div>
  <div class="abs" style="left:1264px;top:3.5px;font-size:12.4px;color:#1a1a1a;line-height:14px;letter-spacing:-1px">10:07</div>
  <div class="abs" style="left:1248.5px;top:21.5px;font-size:12.3px;color:#1a1a1a;line-height:14px;letter-spacing:-0.25px">2025/07/25</div>
  <svg class="abs" style="left:1324px;top:11px" width="30" height="25" viewBox="0 0 30 25"><path d="M1 1H17V14H7L4 17V14H1Z" fill="#111"/><path d="M4 4.5H14M4 7.5H14M4 10.5H12" stroke="#fff" stroke-width="1"/><circle cx="16.6" cy="16.2" r="8.3" fill="#dcdcdc" stroke="#8a8a8a" stroke-width="0.8"/><text x="16.6" y="20.3" font-size="11" fill="#111" text-anchor="middle" font-family="Liberation Sans" letter-spacing="-0.8">13</text></svg>
  <div class="abs" style="left:1361px;top:0;width:1px;height:40px;background:#c9c2bf"></div>
</div>
<svg class="abs" style="left:1304px;top:676px" width="34" height="34" viewBox="0 0 34 34"><defs><linearGradient id="chg" x1="0" y1="0" x2="1" y2="0"><stop offset="0" stop-color="#0a4ea6"/><stop offset="1" stop-color="#0b6dd3"/></linearGradient></defs><circle cx="16.9" cy="16.8" r="15.9" fill="url(#chg)"/><path d="M19.5 10.9H11Q9.5 10.9 9.5 12.4V28.8L13.2 25H23Q24.3 25 24.3 23.7V21.5" stroke="#fff" stroke-width="1.7" fill="none" stroke-linejoin="round"/><path d="M22.6 6.8L23.6 9.6L26.4 10.6L23.6 11.6L22.6 14.4L21.6 11.6L18.8 10.6L21.6 9.6Z" fill="#fff"/><circle cx="26.2" cy="16.5" r="1.1" fill="#fff"/><circle cx="26.2" cy="20.3" r="1.1" fill="#fff"/></svg>
</body></html>
